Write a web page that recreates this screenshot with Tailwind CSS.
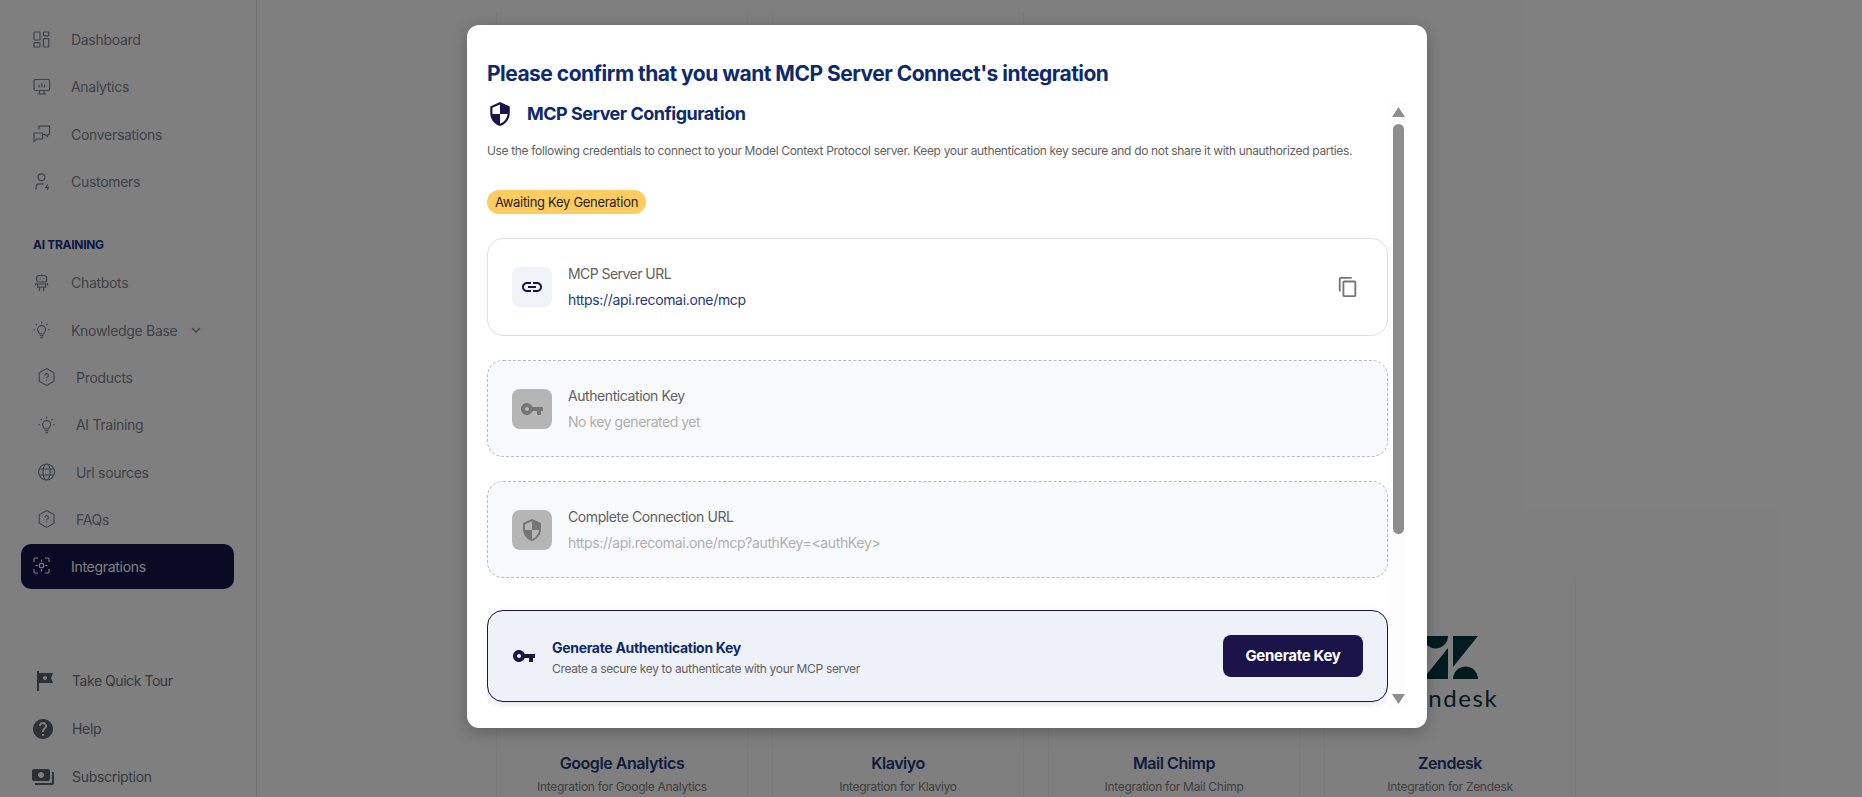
<!DOCTYPE html>
<html lang="en">
<head>
    <meta charset="UTF-8">
    <meta name="viewport" content="width=device-width, initial-scale=1.0">
    <title>Integrations</title>
    <script src="https://cdn.jsdelivr.net/npm/@tailwindcss/browser@4"></script>
</head>
<body class="bg-white h-[797px] overflow-hidden relative font-['Inter',sans-serif] tracking-[-0.3px]">
    <div class="flex h-[797px]">
        <!-- Sidebar -->
        <aside class="w-[257px] shrink-0 h-[797px] border-r border-[#e4e5e7] flex flex-col text-[14px] text-[#7f848e]">
            <div class="h-[1px] w-[6px] ml-[51px] bg-[#5a6a90]"></div>
            <nav class="pt-[16px]">
                <a class="flex items-center h-[47.3px] pl-[33px] gap-[20px]">
                    <svg class="w-[18px] h-[18px]" viewBox="0 0 18 18" fill="none" stroke="currentColor" stroke-width="1.2"><rect x="1" y="1" width="6" height="8" rx=".5"/><rect x="10.4" y="1" width="5.4" height="3.8" rx=".5"/><rect x="1" y="11.6" width="6" height="4.4" rx=".5"/><rect x="10.4" y="7.6" width="5.4" height="8.4" rx=".5"/></svg>
                    <span>Dashboard</span>
                </a>
                <a class="flex items-center h-[47.3px] pl-[33px] gap-[20px]">
                    <svg class="w-[18px] h-[18px]" viewBox="0 0 18 18" fill="none" stroke="currentColor" stroke-width="1.2"><rect x="1" y="1.5" width="15.6" height="11" rx="1.5"/><path d="M6.5 12.5v3.4M11 12.5v3.4M4.5 16h8.6M6 9.5V7M8.8 9.5V5.2M11.5 9.5V6.6"/></svg>
                    <span>Analytics</span>
                </a>
                <a class="flex items-center h-[47.3px] pl-[33px] gap-[20px]">
                    <svg class="w-[18px] h-[18px]" viewBox="0 0 18 18" fill="none" stroke="currentColor" stroke-width="1.2"><path d="M6 4.6V1.2h10.5v8.4h-2v2L12 9.6H9"/><path d="M1 8h8.6v6H3.6L1 16.6z"/></svg>
                    <span>Conversations</span>
                </a>
                <a class="flex items-center h-[47.3px] pl-[33px] gap-[20px]">
                    <svg class="w-[18px] h-[18px]" viewBox="0 0 18 18" fill="none" stroke="currentColor" stroke-width="1.2"><circle cx="8.5" cy="4.2" r="3.4"/><path d="M3 16.5v-2.2c0-2 1.6-3.4 3.5-3.4h4.2"/><path d="M14.8 11.5l-2 3h2.600l-1.400 2.500" stroke-width="1.1"/></svg>
                    <span>Customers</span>
                </a>
            </nav>
            <div class="mt-[32px] pl-[33px] text-[12px] leading-[16px] font-bold text-[#16307f]">AI TRAINING</div>
            <nav class="mt-[6px]">
                <a class="flex items-center h-[47.3px] pl-[33px] gap-[20px]">
                    <svg class="w-[18px] h-[18px]" viewBox="0 0 18 18" fill="none" stroke="currentColor" stroke-width="1.2"><rect x="3.6" y="1.6" width="10" height="6.4" rx="2"/><path d="M8.6 1.6V.4M3.6 9.2l-1.600 2.200M13.600 9.200l1.600 2.200M4.600 10h8v3.200h-8zM6.400 13.200V17M10.800 13.200V17"/><path d="M6.800 4.800h.8M9.800 4.800h.8" stroke-width="1.4"/></svg>
                    <span>Chatbots</span>
                </a>
                <a class="flex items-center h-[47.3px] pl-[33px] gap-[20px]">
                    <svg class="w-[18px] h-[18px]" viewBox="0 0 18 18" fill="none" stroke="currentColor" stroke-width="1.1"><path d="M8.6.6v1.6M2.7 3l1.1 1.1M14.5 3l-1.1 1.1M.4 8.8H2M15.2 8.8h1.6"/><path d="M6.3 12.8c0-1.3-1.7-2-1.7-4.2a4 4 0 0 1 8 0c0 2.2-1.7 2.9-1.7 4.2z"/><path d="M6.6 14.6h4M7.4 16.6h2.4"/></svg>
                    <span>Knowledge Base</span>
                    <svg class="w-[10px] h-[10px] ml-[-6px]" viewBox="0 0 10 10" fill="none" stroke="currentColor" stroke-width="1.3"><path d="M1 3l4 4 4-4"/></svg>
                </a>
                <a class="flex items-center h-[47.3px] pl-[38px] gap-[20px]">
                    <svg class="w-[18px] h-[18px]" viewBox="0 0 18 18" fill="none" stroke="currentColor" stroke-width="1.1"><path d="M8.6.6l7.4 4.2v8.4l-7.4 4.2-7.4-4.2V4.8z"/><path d="M6.9 7.4a1.8 1.8 0 1 1 2.6 1.6c-.6.3-.9.6-.9 1.3M8.6 11.7v.8"/></svg>
                    <span>Products</span>
                </a>
                <a class="flex items-center h-[47.3px] pl-[38px] gap-[20px]">
                    <svg class="w-[18px] h-[18px]" viewBox="0 0 18 18" fill="none" stroke="currentColor" stroke-width="1.1"><path d="M8.6.6v1.6M2.7 3l1.1 1.1M14.5 3l-1.1 1.1M.4 8.8H2M15.2 8.8h1.6"/><path d="M6.3 12.8c0-1.3-1.7-2-1.7-4.2a4 4 0 0 1 8 0c0 2.2-1.7 2.9-1.7 4.2z"/><path d="M6.6 14.6h4M7.4 16.6h2.4"/></svg>
                    <span>AI Training</span>
                </a>
                <a class="flex items-center h-[47.3px] pl-[38px] gap-[20px]">
                    <svg class="w-[18px] h-[18px]" viewBox="0 0 18 18" fill="none" stroke="currentColor" stroke-width="1.1"><circle cx="8.6" cy="9" r="8"/><ellipse cx="8.6" cy="9" rx="3.6" ry="8"/><path d="M1.4 6h14.4M1.4 12h14.4"/></svg>
                    <span>Url sources</span>
                </a>
                <a class="flex items-center h-[47.3px] pl-[38px] gap-[20px]">
                    <svg class="w-[18px] h-[18px]" viewBox="0 0 18 18" fill="none" stroke="currentColor" stroke-width="1.1"><path d="M8.6.6l7.4 4.2v8.4l-7.4 4.2-7.4-4.2V4.8z"/><path d="M6.9 7.4a1.8 1.8 0 1 1 2.6 1.6c-.6.3-.9.6-.9 1.3M8.6 11.7v.8"/></svg>
                    <span>FAQs</span>
                </a>
                <a class="flex items-center h-[45px] w-[213px] ml-[21px] pl-[12px] gap-[20px] mt-[1px] rounded-[10px] bg-[#141449] text-white">
                    <svg class="w-[18px] h-[18px]" viewBox="0 0 18 18" fill="none" stroke="currentColor" stroke-width="1.1"><path d="M1 5V2.2C1 1.5 1.5 1 2.2 1H5M12 1h2.8c.7 0 1.2.5 1.2 1.2V5M16 12v2.8c0 .7-.5 1.2-1.2 1.2H12M5 16H2.2C1.5 16 1 15.500 1 14.800V12"/><circle cx="8.500" cy="8.500" r="2.300"/><path d="M8.500 2.500v2.200M8.500 12.300v2.200M2.500 8.500h2.200M12.300 8.500h2.200"/></svg>
                    <span>Integrations</span>
                </a>
            </nav>
            <nav class="mt-[68px] text-[#6f747d]">
                <a class="flex items-center h-[48px] pl-[33px] gap-[16px]">
                    <svg class="w-[24px] h-[24px] -ml-[1px] fill-[#5b6068]" viewBox="0 0 24 24"><path d="M21 4H7V2H5v20h2v-8h14l-2-5 2-5zm-6 5c0 1.100-.9 2-2 2s-2-.9-2-2 .9-2 2-2 2 .9 2 2z"/></svg>
                    <span class="tracking-[-0.45px]">Take Quick Tour</span>
                </a>
                <a class="flex items-center h-[48px] pl-[33px] gap-[16px]">
                    <svg class="w-[24px] h-[24px] -ml-[2px] fill-[#5b6068]" viewBox="0 0 24 24"><path d="M12 2C6.480 2 2 6.480 2 12s4.480 10 10 10 10-4.480 10-10S17.520 2 12 2zm1 17h-2v-2h2v2zm2.070-7.750l-.9.92C13.450 12.900 13 13.500 13 15h-2v-.5c0-1.100.45-2.100 1.170-2.830l1.240-1.260c.37-.36.59-.86.59-1.410 0-1.100-.9-2-2-2s-2 .9-2 2H8c0-2.210 1.790-4 4-4s4 1.790 4 4c0 .88-.36 1.680-.93 2.250z"/></svg>
                    <span class="ml-[1px]">Help</span>
                </a>
                <a class="flex items-center h-[48px] pl-[33px] gap-[16px]">
                    <svg class="w-[24px] h-[24px] -ml-[2px] fill-[#5b6068]" viewBox="0 0 24 24"><path d="M19 14V6c0-1.100-.9-2-2-2H3c-1.100 0-2 .9-2 2v8c0 1.100.9 2 2 2h14c1.100 0 2-.9 2-2zm-9-1c-1.660 0-3-1.340-3-3s1.340-3 3-3 3 1.340 3 3-1.340 3-3 3zm13-6v11c0 1.100-.9 2-2 2H4v-2h17V7h2z"/></svg>
                    <span class="ml-[1px]">Subscription</span>
                </a>
            </nav>
        </aside>

        <!-- Integration cards behind the dialog -->
        <main class="flex-1 pl-[239px] pt-[12px]">
            <div class="grid grid-cols-[252px_252px_252px_252px] gap-x-[24px] gap-y-[24px] grid-rows-[541px_auto]">
                <div class="border-x border-[#f3f4f6]"></div>
                <div class="border-x border-[#f3f4f6] col-span-1"></div>
                <div></div>
                <div></div>
                <div class="border-x border-[#f3f4f6] h-[240px] flex flex-col items-center pt-[176px]">
                    <div class="text-[16px] leading-[20px] font-semibold tracking-[-0.45px] text-[#22387a]">Google Analytics</div>
                    <div class="text-[12px] leading-[16px] mt-[6px] text-[#7f7f7f]">Integration for Google Analytics</div>
                </div>
                <div class="border-x border-[#f3f4f6] h-[240px] flex flex-col items-center pt-[176px]">
                    <div class="text-[16px] leading-[20px] font-semibold tracking-[-0.45px] text-[#22387a]">Klaviyo</div>
                    <div class="text-[12px] leading-[16px] mt-[6px] text-[#7f7f7f]">Integration for Klaviyo</div>
                </div>
                <div class="border-x border-[#f3f4f6] h-[240px] flex flex-col items-center pt-[176px]">
                    <div class="text-[16px] leading-[20px] font-semibold tracking-[-0.45px] text-[#22387a]">Mail Chimp</div>
                    <div class="text-[12px] leading-[16px] mt-[6px] text-[#7f7f7f]">Integration for Mail Chimp</div>
                </div>
                <div class="border-x border-[#f3f4f6] h-[240px] flex flex-col items-center pt-[59px]">
                    <svg class="w-[55px] h-[43px] fill-[#03363d]" viewBox="0 0 55 43"><path d="M0 0a12.500 12.500 0 0 0 25 0z"/><path d="M25 12v31H0z"/><path d="M30 0h25L30 31z"/><path d="M30 43a12.500 12.500 0 0 1 25 0z"/></svg>
                    <div class="text-[24px] leading-[30px] mt-[4px] tracking-[1.6px] text-[#03363d] font-['Lato',sans-serif]">zendesk</div>
                    <div class="text-[16px] leading-[20px] font-semibold tracking-[-0.45px] text-[#22387a] mt-[40px]">Zendesk</div>
                    <div class="text-[12px] leading-[16px] mt-[6px] text-[#7f7f7f]">Integration for Zendesk</div>
                </div>
            </div>
        </main>
    </div>

    <!-- Dialog overlay -->
    <div class="absolute inset-0 bg-black/50 pl-[467px] pt-[25px]">
        <div class="w-[960px] h-[703px] bg-white rounded-[12px] shadow-[0_4px_16px_rgba(0,0,0,0.25)] pl-[20px]">
            <h2 class="pt-[35px] text-[21px] leading-[28px] font-bold tracking-[-0.52px] text-[#0f2a6b]">Please confirm that you want MCP Server Connect's integration</h2>
            <div class="flex mt-[13px] h-[607px]">
                <div class="w-[901px] h-[607px] overflow-hidden pt-[1px]">
                    <div class="flex items-center h-[24px] gap-[14px]">
                        <svg class="w-[26px] h-[26px] fill-[#1a1449]" viewBox="0 0 24 24"><path d="M12 1L3 5v6c0 5.550 3.840 10.740 9 12 5.160-1.260 9-6.450 9-12V5l-9-4zm0 10.990h7c-.53 4.120-3.280 7.790-7 8.940V12H5V6.300l7-3.110v8.800z"/></svg>
                        <h3 class="text-[18px] leading-[24px] font-bold tracking-[-0.5px] text-[#0f2a6b]">MCP Server Configuration</h3>
                    </div>
                    <p class="mt-[17px] text-[12px] leading-[16px] tracking-[-0.34px] text-[#616161]">Use the following credentials to connect to your Model Context Protocol server. Keep your authentication key secure and do not share it with unauthorized parties.</p>
                    <div class="mt-[31px] h-[24px] w-[159px] rounded-full bg-[#ffcc61] flex items-center justify-center pt-[1px] text-[13px] text-[#1f1f1f]">Awaiting Key Generation</div>

                    <div class="mt-[24px] h-[98px] rounded-[16px] border border-[#e0e0e0] flex items-center pl-[24px] pr-[28px]">
                        <div class="w-[40px] h-[40px] rounded-[8px] bg-[#f0f3f8] flex items-center justify-center">
                            <svg class="w-[24px] h-[24px] fill-[#1a1449]" viewBox="0 0 24 24"><path d="M3.900 12c0-1.710 1.390-3.100 3.100-3.100h4V7H7c-2.760 0-5 2.240-5 5s2.240 5 5 5h4v-1.900H7c-1.710 0-3.100-1.390-3.100-3.100zM8 13h8v-2H8v2zm9-6h-4v1.900h4c1.710 0 3.100 1.390 3.100 3.100s-1.390 3.100-3.100 3.100h-4V17h4c2.760 0 5-2.240 5-5s-2.240-5-5-5z"/></svg>
                        </div>
                        <div class="ml-[16px] flex-1">
                            <div class="text-[14px] leading-[20px] tracking-[-0.55px] text-[#616161]">MCP Server URL</div>
                            <div class="text-[14px] leading-[20px] mt-[6px] tracking-[-0.34px] text-[#1f3a7a]">https://api.recomai.one/mcp</div>
                        </div>
                        <svg class="w-[22px] h-[22px] fill-[#757575]" viewBox="0 0 24 24"><path d="M16 1H4c-1.100 0-2 .9-2 2v14h2V3h12V1zm3 4H8c-1.100 0-2 .9-2 2v14c0 1.100.9 2 2 2h11c1.100 0 2-.9 2-2V7c0-1.100-.9-2-2-2zm0 16H8V7h11v14z"/></svg>
                    </div>

                    <div class="mt-[24px] h-[97px] rounded-[16px] border border-dashed border-[#bdbdbd] bg-[#f8f9fb] flex items-center pl-[24px]">
                        <div class="w-[40px] h-[40px] rounded-[8px] bg-[#b5b5b5] flex items-center justify-center">
                            <svg class="w-[24px] h-[24px] fill-[#757575]" viewBox="0 0 24 24"><path d="M12.650 10C11.830 7.670 9.610 6 7 6c-3.310 0-6 2.690-6 6s2.690 6 6 6c2.610 0 4.830-1.670 5.650-4H17v4h4v-4h2v-4H12.650zM7 14c-1.100 0-2-.9-2-2s.9-2 2-2 2 .9 2 2-.9 2-2 2z"/></svg>
                        </div>
                        <div class="ml-[16px]">
                            <div class="text-[14px] leading-[20px] tracking-[-0.42px] text-[#616161]">Authentication Key</div>
                            <div class="text-[14px] leading-[20px] mt-[6px] tracking-[-0.48px] text-[#b0b0b0]">No key generated yet</div>
                        </div>
                    </div>

                    <div class="mt-[24px] h-[97px] rounded-[16px] border border-dashed border-[#bdbdbd] bg-[#f8f9fb] flex items-center pl-[24px]">
                        <div class="w-[40px] h-[40px] rounded-[8px] bg-[#b5b5b5] flex items-center justify-center">
                            <svg class="w-[24px] h-[24px] fill-[#757575]" viewBox="0 0 24 24"><path d="M12 1L3 5v6c0 5.550 3.840 10.740 9 12 5.160-1.260 9-6.450 9-12V5l-9-4zm0 10.990h7c-.53 4.120-3.280 7.790-7 8.940V12H5V6.300l7-3.110v8.800z"/></svg>
                        </div>
                        <div class="ml-[16px]">
                            <div class="text-[14px] leading-[20px] tracking-[-0.4px] text-[#616161]">Complete Connection URL</div>
                            <div class="text-[14px] leading-[20px] mt-[6px] tracking-[-0.36px] text-[#b0b0b0]">https://api.recomai.one/mcp?authKey=&lt;authKey&gt;</div>
                        </div>
                    </div>

                    <div class="mt-[32px] h-[92px] rounded-[16px] border border-[#1a1449] bg-[#eef1f7] shadow-[0_2px_6px_rgba(0,0,0,0.12)] flex items-center pl-[24px] pr-[24px]">
                        <svg class="w-[24px] h-[24px] fill-[#1a1449]" viewBox="0 0 24 24"><path d="M12.650 10C11.830 7.670 9.610 6 7 6c-3.310 0-6 2.690-6 6s2.690 6 6 6c2.610 0 4.830-1.670 5.650-4H17v4h4v-4h2v-4H12.650zM7 14c-1.100 0-2-.9-2-2s.9-2 2-2 2 .9 2 2-.9 2-2 2z"/></svg>
                        <div class="ml-[16px] flex-1 pt-[2px]">
                            <div class="text-[14px] leading-[20px] font-bold tracking-[-0.31px] text-[#0f2a6b]">Generate Authentication Key</div>
                            <div class="text-[12px] leading-[16px] mt-[3px] tracking-[-0.34px] text-[#616161]">Create a secure key to authenticate with your MCP server</div>
                        </div>
                        <button class="w-[140px] h-[42px] rounded-[8px] bg-[#1a1449] text-white text-[15px] font-bold">Generate Key</button>
                    </div>
                </div>

                <!-- Scrollbar -->
                <div class="w-[19px] h-[607px] bg-[#fdfdfd] flex flex-col items-center pl-[1px]">
                    <svg class="w-[13px] h-[10px] mt-[6px] fill-[#8e8e8e]" viewBox="0 0 13 10"><path d="M6.500 0L13 10H0z"/></svg>
                    <div class="w-[11px] h-[410px] mt-[7px] rounded-full bg-[#8e8e8e]"></div>
                    <svg class="w-[13px] h-[10px] mt-[160px] fill-[#8e8e8e]" viewBox="0 0 13 10"><path d="M0 0h13L6.500 10z"/></svg>
                </div>
            </div>
        </div>
    </div>
</body>
</html>
